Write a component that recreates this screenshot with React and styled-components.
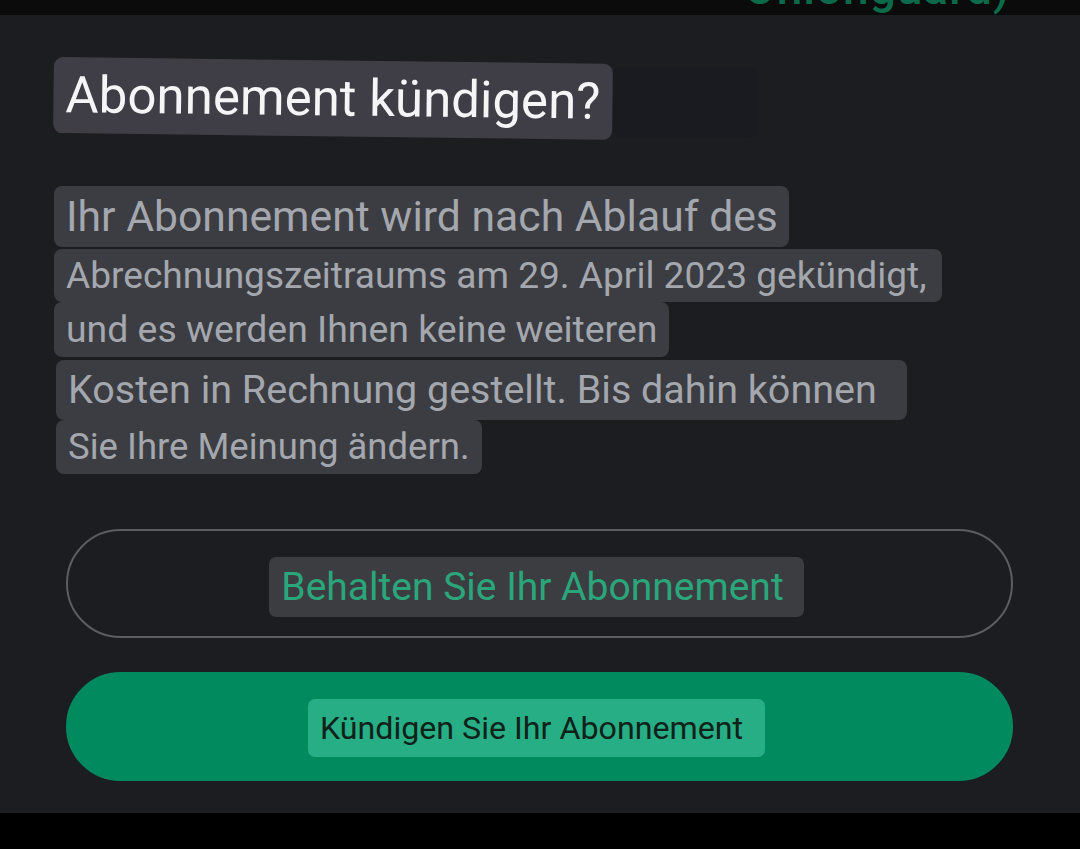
import React from 'react';
import styled, { createGlobalStyle } from 'styled-components';

const GlobalStyle = createGlobalStyle`
  html, body {
    margin: 0;
    padding: 0;
    background: #000;
  }
  body {
    font-family: Roboto, "Noto Sans", "Liberation Sans", sans-serif;
  }
`;

const Page = styled.div`
  width: 1080px;
  height: 849px;
  display: flex;
  flex-direction: column;
  overflow: hidden;
`;

const TopStrip = styled.div`
  height: 15px;
  background: #0b0b0b;
  overflow: hidden;
  display: flex;
  justify-content: flex-end;
  padding-right: 70px;
`;

const StripBrand = styled.span`
  font-size: 46px;
  line-height: 46px;
  margin-top: -35px;
  color: #0b6a49;
  font-weight: 500;
  letter-spacing: 1px;
`;

const Sheet = styled.div`
  flex: 1;
  background: #1c1d20;
  padding: 42px 67px 0 54px;
  display: flex;
  flex-direction: column;
`;

const TitleRow = styled.div`
  display: flex;
  align-items: flex-start;
`;

const TitleChip = styled.h1`
  margin: 0;
  background: #3f3e46;
  color: #f5f5f7;
  font-weight: 400;
  font-size: 51px;
  line-height: 76px;
  padding: 0 12px;
  border-radius: 9px;
  transform: rotate(0.7deg);
  transform-origin: left top;
`;

const Ghost = styled.div`
  width: 145px;
  height: 70px;
  margin-top: 10px;
  background: #1a1a21;
  border-radius: 8px;
`;

const Paragraph = styled.div`
  margin-top: 49px;
  display: flex;
  flex-direction: column;
  align-items: flex-start;
`;

const Line = styled.span`
  display: inline-block;
  background: #3c3d42;
  color: #a4a7ae;
  font-size: ${p => p.$size}px;
  line-height: ${p => p.$h}px;
  height: ${p => p.$h}px;
  padding: 0 ${p => p.$pr}px 0 12px;
  margin-left: ${p => p.$ml || 0}px;
  margin-top: ${p => p.$mt || 0}px;
  border-radius: 8px;
  white-space: pre;
`;

const Actions = styled.div`
  margin-top: 55px;
  margin-left: 12px;
  display: flex;
  flex-direction: column;
  gap: 34px;
`;

const PillButton = styled.button`
  height: 109px;
  border-radius: 55px;
  border: 2px solid ${p => (p.$filled ? '#008a5e' : '#5c5d61')};
  background: ${p => (p.$filled ? '#008a5e' : 'transparent')};
  display: flex;
  align-items: center;
  justify-content: center;
  padding: 0;
  cursor: pointer;
  font-family: inherit;
`;

const ButtonChip = styled.span`
  display: inline-block;
  background: ${p => (p.$filled ? '#27ae85' : '#3b3d41')};
  color: ${p => (p.$filled ? '#0f2219' : '#2ba67b')};
  font-size: ${p => p.$size}px;
  line-height: ${p => p.$h}px;
  padding: 0 ${p => p.$pr}px 0 12px;
  margin-left: ${p => p.$ml || 0}px;
  margin-top: ${p => p.$mt || 0}px;
  border-radius: 7px;
`;

const BottomBar = styled.div`
  height: 36px;
  background: #000;
`;

export default function App() {
  return (
    <>
      <GlobalStyle />
      <Page>
        <TopStrip>
          <StripBrand>Onionguard)</StripBrand>
        </TopStrip>
        <Sheet>
          <TitleRow>
            <TitleChip>Abonnement kündigen?</TitleChip>
            <Ghost />
          </TitleRow>
          <Paragraph>
            <Line $size={42.7} $h={61} $pr={11}>Ihr Abonnement wird nach Ablauf des</Line>
            <Line $size={37.1} $h={53} $pr={15} $mt={2}>Abrechnungszeitraums am 29. April 2023 gekündigt,</Line>
            <Line $size={37.4} $h={55} $pr={12}>und es werden Ihnen keine weiteren</Line>
            <Line $size={39.5} $h={60} $pr={30} $ml={2} $mt={3}>Kosten in Rechnung gestellt. Bis dahin können</Line>
            <Line $size={36.5} $h={54} $pr={12} $ml={2}>Sie Ihre Meinung ändern.</Line>
          </Paragraph>
          <Actions>
            <PillButton>
              <ButtonChip $size={39} $h={60} $pr={20} $ml={-6} $mt={6}>Behalten Sie Ihr Abonnement</ButtonChip>
            </PillButton>
            <PillButton $filled>
              <ButtonChip $filled $size={32.2} $h={58} $pr={22} $ml={-6} $mt={2}>Kündigen Sie Ihr Abonnement</ButtonChip>
            </PillButton>
          </Actions>
        </Sheet>
        <BottomBar />
      </Page>
    </>
  );
}
